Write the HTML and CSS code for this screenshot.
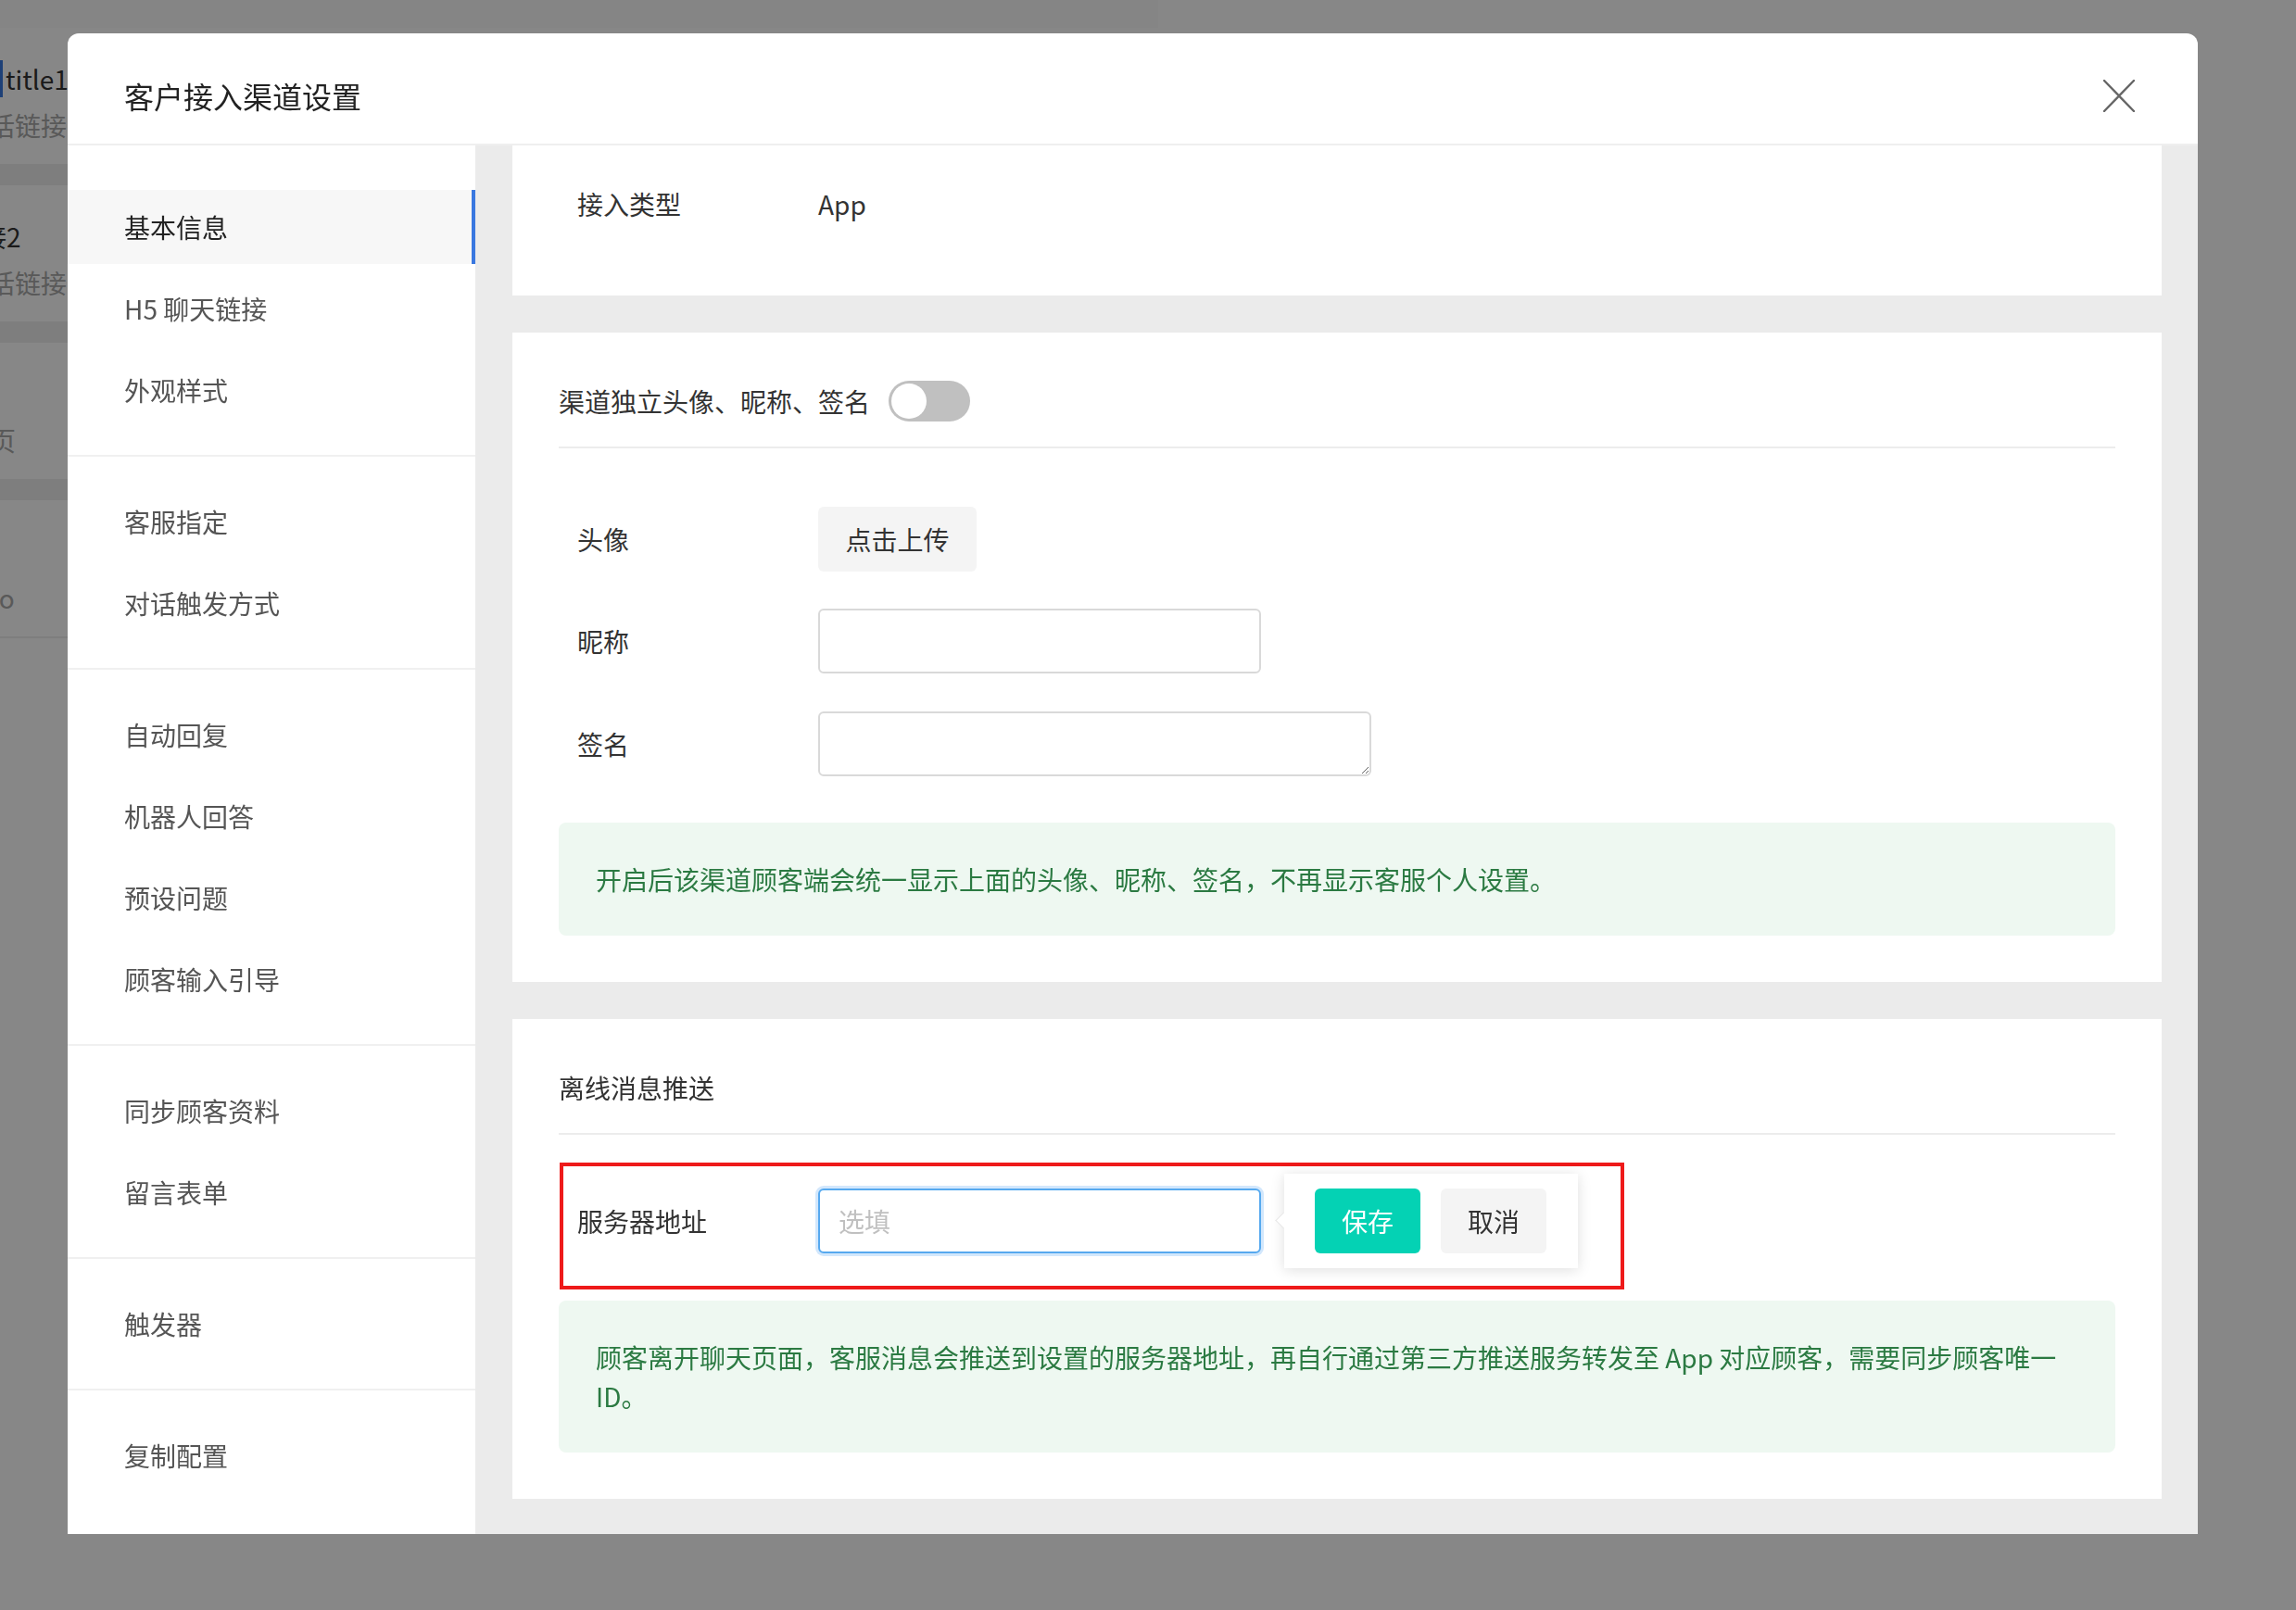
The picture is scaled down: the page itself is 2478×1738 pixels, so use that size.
FILE: index.html
```html
<!DOCTYPE html>
<html lang="zh-CN">
<head>
<meta charset="utf-8">
<title>客户接入渠道设置</title>
<link rel="stylesheet" href="styles.css">
</head>
<body>
<div class="page">
  <div class="page-top"></div>
  <ul class="conv-list">
    <li class="conv-item">
      <div class="conv-title marked">title1</div>
      <div class="conv-sub shift-a">会话链接</div>
    </li>
    <li class="conv-item">
      <div class="conv-title shift-b">链接2</div>
      <div class="conv-sub shift-a">会话链接</div>
    </li>
    <li class="conv-item">
      <div class="conv-title"></div>
      <div class="conv-sub shift-c">首页</div>
    </li>
    <li class="conv-item last">
      <div class="conv-title"></div>
      <div class="conv-sub shift-d">Demo</div>
    </li>
  </ul>
</div>
<div class="mask"></div>
<div class="dialog">
  <div class="dialog-header">
    <h1 class="dialog-title">客户接入渠道设置</h1>
    <button class="dialog-close" type="button" aria-label="关闭">
      <svg width="34" height="35" viewBox="0 0 34 35"><path d="M1 1 L33 34 M33 1 L1 34" stroke="#666" stroke-width="2.4" fill="none" stroke-linecap="round"/></svg>
    </button>
  </div>
  <div class="dialog-body">
    <nav class="side-nav">
      <div class="nav-group first">
        <div class="nav-item active">基本信息</div>
        <div class="nav-item">H5 聊天链接</div>
        <div class="nav-item">外观样式</div>
      </div>
      <div class="nav-group">
        <div class="nav-item">客服指定</div>
        <div class="nav-item">对话触发方式</div>
      </div>
      <div class="nav-group">
        <div class="nav-item">自动回复</div>
        <div class="nav-item">机器人回答</div>
        <div class="nav-item">预设问题</div>
        <div class="nav-item">顾客输入引导</div>
      </div>
      <div class="nav-group">
        <div class="nav-item">同步顾客资料</div>
        <div class="nav-item">留言表单</div>
      </div>
      <div class="nav-group">
        <div class="nav-item">触发器</div>
      </div>
      <div class="nav-group last">
        <div class="nav-item">复制配置</div>
      </div>
    </nav>
    <main class="content">
      <section class="card card-basic">
        <div class="info-row">
          <span class="form-label">接入类型</span>
          <span class="info-value">App</span>
        </div>
      </section>
      <section class="card card-pad">
        <div class="section-head">
          <span>渠道独立头像、昵称、签名</span>
          <span class="switch"><span class="switch-knob"></span></span>
        </div>
        <div class="form-row first">
          <span class="form-label">头像</span>
          <button class="upload-btn" type="button">点击上传</button>
        </div>
        <div class="form-row">
          <span class="form-label">昵称</span>
          <input class="text-input" type="text">
        </div>
        <div class="form-row sign-row">
          <span class="form-label">签名</span>
          <textarea class="text-area"></textarea>
        </div>
        <div class="notice notice-gap">开启后该渠道顾客端会统一显示上面的头像、昵称、签名，不再显示客服个人设置。</div>
      </section>
      <section class="card card-pad">
        <div class="section-head">
          <span>离线消息推送</span>
        </div>
        <div class="server-row">
          <span class="form-label server-label">服务器地址</span>
          <input class="text-input focused" type="text" placeholder="选填">
          <div class="popover">
            <button class="btn btn-save" type="button">保存</button>
            <button class="btn btn-cancel" type="button">取消</button>
          </div>
        </div>
        <div class="notice notice-tight">顾客离开聊天页面，客服消息会推送到设置的服务器地址，再自行通过第三方推送服务转发至 App 对应顾客，需要同步顾客唯一ID。</div>
      </section>
    </main>
  </div>
</div>
</body>
</html>
```

FILE: styles.css
```css
html, body {
  margin: 0;
  padding: 0;
}

body {
  width: 2478px;
  height: 1738px;
  overflow: hidden;
  background: #ffffff;
  font-family: "Noto Sans CJK SC", "Noto Sans", sans-serif;
}

/* underlying page (dimmed by the mask) */
.page {
  width: 1250px;
}

.page-top {
  height: 30px;
  background: #fbfbfb;
}

.conv-list {
  list-style: none;
  margin: 0;
  padding: 0;
}

.conv-item {
  height: 170px;
  box-sizing: border-box;
  padding-top: 35px;
  border-bottom: 23px solid #efefef;
  background: #ffffff;
  overflow: hidden;
}

.conv-item.last {
  height: 149px;
  border-bottom-width: 2px;
}

.conv-title {
  height: 40px;
  line-height: 40px;
  font-size: 28px;
  color: #333333;
  white-space: nowrap;
}

.conv-title.marked {
  border-left: 3px solid #3a7ae0;
  padding-left: 3px;
  width: fit-content;
}

.conv-sub {
  margin-top: 10px;
  height: 40px;
  line-height: 40px;
  font-size: 28px;
  color: #a8a8a8;
  white-space: nowrap;
}

.shift-a { margin-left: -40px; }
.shift-b { margin-left: -49px; }
.shift-c { margin-left: -39px; }
.shift-d { margin-left: -62px; }

.mask {
  position: fixed;
  inset: 0;
  background: rgba(0, 0, 0, 0.47);
}

/* dialog */
.dialog {
  position: fixed;
  left: 73px;
  top: 36px;
  width: 2299px;
  height: 1620px;
  background: #ffffff;
  border-radius: 12px 12px 0 0;
  display: flex;
  flex-direction: column;
  overflow: hidden;
}

.dialog-header {
  flex: none;
  height: 121px;
  box-sizing: border-box;
  padding: 45px 68px 0 61px;
  display: flex;
  justify-content: space-between;
  align-items: flex-start;
  border-bottom: 2px solid #efefef;
}

.dialog-title {
  margin: 0;
  font-size: 32px;
  font-weight: 400;
  line-height: 44px;
  color: #222222;
}

.dialog-close {
  display: block;
  width: 34px;
  height: 35px;
  margin-top: 5px;
  padding: 0;
  border: none;
  background: none;
}

.dialog-close svg {
  display: block;
}

.dialog-body {
  flex: 1;
  min-height: 0;
  display: flex;
}

/* side navigation */
.side-nav {
  width: 440px;
  flex: none;
  overflow: hidden;
  background: #ffffff;
}

.nav-group {
  padding: 30px 0;
  border-bottom: 2px solid #f0f0f0;
  display: flex;
  flex-direction: column;
  gap: 8px;
}

.nav-group.first {
  padding-top: 48px;
}

.nav-group.last {
  border-bottom: none;
}

.nav-item {
  height: 80px;
  line-height: 80px;
  padding-left: 61px;
  font-size: 28px;
  color: #555555;
  white-space: nowrap;
}

.nav-item.active {
  background: #f7f7f7;
  color: #222222;
  box-shadow: inset -4px 0 0 #3a78e0;
}

/* content */
.content {
  flex: 1;
  min-width: 0;
  background: #ebebeb;
  padding: 0 39px 0 40px;
  overflow: hidden;
  display: flex;
  flex-direction: column;
  gap: 40px;
}

.card {
  flex: none;
  background: #ffffff;
  padding: 0 50px;
}

.card-basic {
  height: 162px;
  box-sizing: border-box;
  padding-top: 43px;
}

.card-pad {
  padding: 50px;
}

.info-row {
  display: flex;
  align-items: center;
  height: 40px;
}

.form-label {
  flex: none;
  width: 280px;
  box-sizing: border-box;
  padding-left: 20px;
  font-size: 28px;
  line-height: 40px;
  color: #333333;
}

.info-value {
  font-size: 28px;
  line-height: 40px;
  color: #333333;
}

.section-head {
  display: flex;
  align-items: center;
  height: 48px;
  padding-bottom: 25px;
  border-bottom: 2px solid #ececec;
  font-size: 28px;
  line-height: 40px;
  color: #333333;
}

.switch {
  width: 88px;
  height: 44px;
  margin-left: 20px;
  box-sizing: border-box;
  padding: 0 3px;
  border-radius: 22px;
  background: #c0c0c0;
  display: flex;
  align-items: center;
}

.switch-knob {
  width: 38px;
  height: 38px;
  border-radius: 50%;
  background: #ffffff;
}

.form-row {
  display: flex;
  align-items: center;
  margin-top: 40px;
}

.form-row.first {
  margin-top: 63px;
}

.form-row.sign-row {
  margin-top: 41px;
}

.upload-btn {
  width: 171px;
  height: 70px;
  border: none;
  border-radius: 6px;
  background: #f4f4f4;
  font-family: inherit;
  font-size: 28px;
  color: #333333;
  padding: 0;
}

.text-input {
  width: 478px;
  height: 70px;
  box-sizing: border-box;
  border: 2px solid #d9d9d9;
  border-radius: 6px;
  padding: 0 20px;
  font-family: inherit;
  font-size: 28px;
  color: #333333;
  background: #ffffff;
  outline: none;
}

.text-area {
  width: 597px;
  height: 70px;
  box-sizing: border-box;
  border: 2px solid #d9d9d9;
  border-radius: 6px;
  padding: 10px 20px;
  font-family: inherit;
  font-size: 28px;
  color: #333333;
  outline: none;
  display: block;
}

.notice {
  background: #eef8f1;
  color: #2b7a42;
  border-radius: 8px;
  padding: 40px;
  font-size: 28px;
  line-height: 42px;
}

.notice-gap {
  margin-top: 50px;
}

.notice-tight {
  margin-top: 12px;
}

/* annotated server row */
.server-row {
  width: 1149px;
  box-sizing: border-box;
  margin-top: 30px;
  margin-left: 1px;
  border: 4px solid #ee1a1a;
  padding: 8px 0 19px 0;
  display: flex;
  align-items: center;
}

.server-label {
  width: 275px;
  padding-left: 15px;
}

.text-input.focused {
  border-color: #56a9ef;
  box-shadow: 0 0 0 3px #d2e7fc;
}

.text-input::placeholder {
  color: #c0c0c0;
}

.popover {
  position: relative;
  margin-left: 25px;
  padding: 16px 34px 16px 33px;
  background: #ffffff;
  box-shadow: 0 2px 14px rgba(0, 0, 0, 0.13);
  display: flex;
  gap: 22px;
}

.popover::before {
  content: "";
  position: absolute;
  left: -7px;
  top: 50%;
  width: 12px;
  height: 12px;
  margin-top: -7px;
  background: #ffffff;
  border-left: 1px solid #e6e6e6;
  border-bottom: 1px solid #e6e6e6;
  transform: rotate(45deg);
}

.btn {
  width: 114px;
  height: 70px;
  border: none;
  border-radius: 6px;
  padding: 0;
  font-family: inherit;
  font-size: 28px;
}

.btn-save {
  background: #04d2b4;
  color: #ffffff;
}

.btn-cancel {
  background: #f4f4f4;
  color: #333333;
}
```
